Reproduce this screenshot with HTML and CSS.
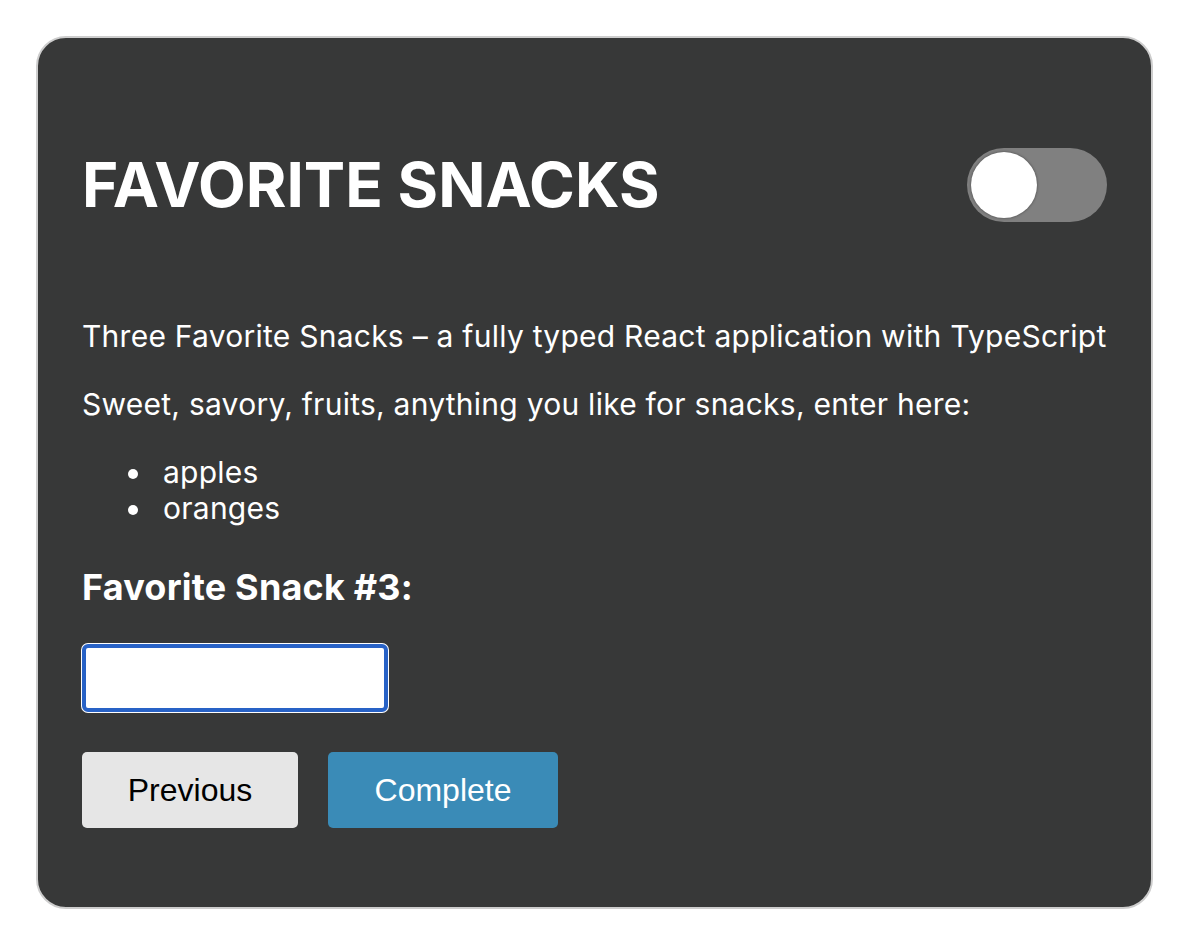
FILE: index.html
```html
<!DOCTYPE html>
<html lang="en">
<head>
<meta charset="utf-8">
<title>Favorite Snacks</title>
<link rel="stylesheet" href="styles.css">
</head>
<body>
<div class="page">
  <div class="card">
    <div class="header">
      <h1 class="title">FAVORITE SNACKS</h1>
      <div class="toggle"><span class="knob"></span></div>
    </div>
    <p class="intro">Three Favorite Snacks – a fully typed React application with TypeScript</p>
    <p class="prompt">Sweet, savory, fruits, anything you like for snacks, enter here:</p>
    <ul class="snacks">
      <li>apples</li>
      <li>oranges</li>
    </ul>
    <h3 class="label">Favorite Snack #3:</h3>
    <input class="field" type="text">
    <div class="actions">
      <button class="btn btn-prev">Previous</button>
      <button class="btn btn-complete">Complete</button>
    </div>
  </div>
</div>
</body>
</html>
```

FILE: styles.css
```css
html, body {
  margin: 0;
  padding: 0;
  background: #ffffff;
}

.page {
  padding: 36px 0 0 36px;
}

.card {
  box-sizing: border-box;
  width: 1117px;
  background: #373838;
  border: 2px solid #cdcdcd;
  border-radius: 30px;
  padding: 110px 44px 79px 44px;
  color: #ffffff;
  font-family: Inter, "Noto Sans", sans-serif;
}

.header {
  display: flex;
  align-items: center;
  justify-content: space-between;
  height: 74px;
}

.title {
  margin: 0;
  font-size: 62px;
  font-weight: 700;
  line-height: 74px;
}

.toggle {
  box-sizing: border-box;
  width: 140px;
  height: 74px;
  border-radius: 37px;
  background: #808080;
  padding: 4px;
  display: flex;
}

.knob {
  width: 66px;
  height: 66px;
  border-radius: 50%;
  background: #ffffff;
  box-shadow: 0 0 3px rgba(0, 0, 0, 0.45);
}

.intro,
.prompt,
.snacks {
  font-size: 30px;
  line-height: 36px;
  letter-spacing: 0.25px;
}

.intro {
  margin: 96px 0 0 0;
}

.prompt {
  margin: 32px 0 0 0;
}

.snacks {
  margin: 32px 0 0 0;
  padding-left: 46px;
  list-style: none;
}

.snacks li {
  display: flex;
  align-items: center;
}

.snacks li::before {
  content: "";
  width: 10px;
  height: 10px;
  border-radius: 50%;
  background: #ffffff;
  margin-right: 25px;
  transform: translateY(2px);
}

.label {
  margin: 40px 0 0 0;
  font-size: 36px;
  font-weight: 700;
  line-height: 42px;
  letter-spacing: 0.2px;
}

.field {
  display: block;
  box-sizing: border-box;
  margin: 36px 0 0 0;
  width: 306px;
  height: 68px;
  background: #ffffff;
  border: 4px solid #2862c6;
  border-radius: 6px;
  box-shadow: 0 0 0 1px #ffffff;
  outline: none;
  padding: 0 12px;
  font-size: 28px;
}

.actions {
  display: flex;
  gap: 30px;
  margin-top: 40px;
}

.btn {
  height: 76px;
  border: none;
  border-radius: 5px;
  font-family: "Liberation Sans", Arial, sans-serif;
  font-size: 32px;
  padding: 0;
}

.btn-prev {
  width: 216px;
  background: #e6e6e6;
  color: #000000;
}

.btn-complete {
  width: 230px;
  background: #3a8bb7;
  color: #ffffff;
}
```
